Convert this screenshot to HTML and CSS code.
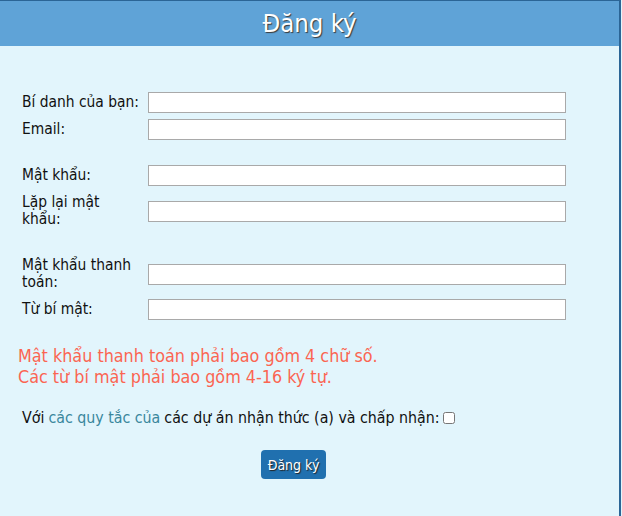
FILE: index.html
```html
<!DOCTYPE html>
<html lang="vi">
<head>
<meta charset="utf-8">
<title>Đăng ký</title>
<link rel="stylesheet" href="styles.css">
</head>
<body>
<div class="page">
  <div class="header">Đăng ký</div>
  <form class="form">
    <div class="row"><label class="lbl">Bí danh của bạn:</label><input class="inp" type="text"></div>
    <div class="row"><label class="lbl">Email:</label><input class="inp" type="text"></div>
    <div class="spacer"></div>
    <div class="row"><label class="lbl">Mật khẩu:</label><input class="inp" type="password"></div>
    <div class="row tall"><label class="lbl">Lặp lại mật khẩu:</label><input class="inp" type="password"></div>
    <div class="spacer"></div>
    <div class="row tall"><label class="lbl">Mật khẩu thanh toán:</label><input class="inp" type="password"></div>
    <div class="row"><label class="lbl">Từ bí mật:</label><input class="inp" type="text"></div>
    <div class="notes">
      <div>Mật khẩu thanh toán phải bao gồm 4 chữ số.</div>
      <div>Các từ bí mật phải bao gồm 4-16 ký tự.</div>
    </div>
    <div class="agree">Với <a class="link" href="#">các quy tắc của</a> các dự án nhận thức (a) và chấp nhận:<input class="chk" type="checkbox"></div>
    <div class="actions"><button class="btn" type="button">Đăng ký</button></div>
  </form>
</div>
</body>
</html>
```

FILE: styles.css
```css
html, body {
  margin: 0;
  padding: 0;
}
body {
  font-family: "DejaVu Sans Condensed", "DejaVu Sans", sans-serif;
  font-stretch: condensed;
  color: #111;
  background: #e2f5fc;
}
.page {
  width: 619px;
  height: 515px;
  border-top: 1px solid #2b6596;
  border-right: 2px solid #2b6596;
  background: #e2f5fc;
}
.header {
  height: 45px;
  line-height: 45px;
  background: #5fa3d7;
  color: #fff;
  text-align: center;
  font-size: 25.5px;
  text-shadow: 1px 1px 1px #3a3a3a;
}
.form {
  display: flex;
  flex-direction: column;
  padding-top: 43px;
}
.row {
  display: flex;
  align-items: center;
  height: 27px;
}
.row.tall {
  height: 44px;
}
.lbl {
  box-sizing: border-box;
  width: 148px;
  padding-left: 22px;
  padding-right: 8px;
  font-size: 15.4px;
  line-height: 17px;
}
.inp {
  box-sizing: border-box;
  width: 418px;
  height: 21px;
  margin: 0;
  border: 1px solid #a9a9a9;
  background: #fff;
  padding: 1px 3px;
}
.spacer {
  height: 19px;
}
.notes {
  margin-top: 22px;
  padding-left: 18px;
  color: #fb6552;
  font-size: 17.8px;
  line-height: 21px;
}
.agree {
  margin-top: 21px;
  padding-left: 22px;
  font-size: 15.8px;
  line-height: 20px;
  display: flex;
  align-items: center;
}
.link {
  color: #3a879c;
  text-decoration: none;
  margin: 0 4px;
}
.chk {
  width: 12px;
  height: 12px;
  margin: 0 0 0 3px;
}
.actions {
  display: flex;
  justify-content: center;
  padding-right: 32px;
  margin-top: 22px;
}
.btn {
  height: 29px;
  padding: 0 7px;
  background: #2070af;
  color: #fff;
  border: none;
  border-radius: 4px;
  font-family: "DejaVu Sans Condensed", "DejaVu Sans", sans-serif;
  font-stretch: condensed;
  font-size: 14px;
  text-shadow: 1px 1px 1px #222;
}
```
